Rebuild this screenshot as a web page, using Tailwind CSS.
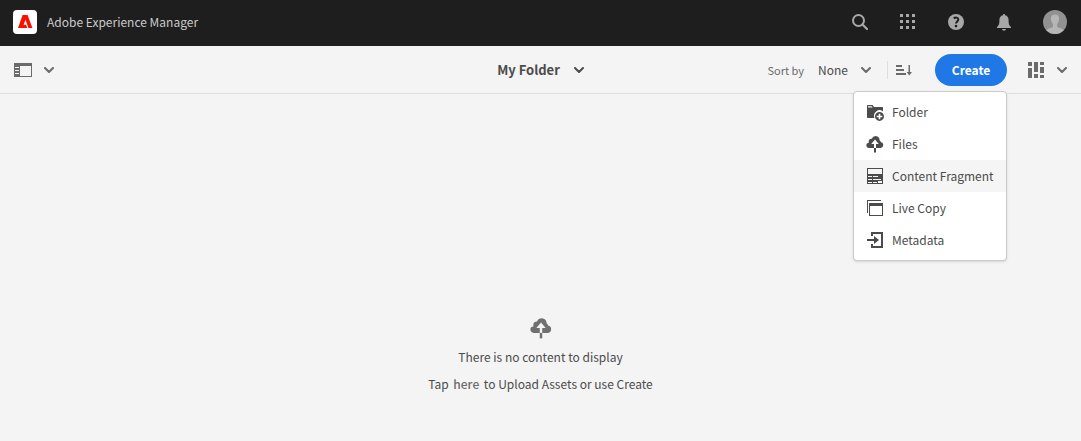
<!DOCTYPE html>
<html lang="en">
<head>
<meta charset="utf-8">
<meta name="viewport" content="width=device-width, initial-scale=1">
<title>Adobe Experience Manager</title>
<script src="https://cdn.jsdelivr.net/npm/@tailwindcss/browser@4"></script>
</head>
<body class="flex min-h-screen flex-col bg-[#f4f4f4] font-['Noto_Sans_CJK_SC','Noto_Sans',sans-serif] text-xs leading-5 text-[#4b4b4b]">

<svg class="hidden" aria-hidden="true">
  <symbol id="chevron" viewBox="0 0 10 6"><path d="M1 1l4 4 4-4" fill="none" stroke="currentColor" stroke-width="2" stroke-linecap="round" stroke-linejoin="round"/></symbol>
  <symbol id="upload" viewBox="0 0 18 18"><path fill="currentColor" d="M14.800 6.900A3 3 0 0 0 13.600 5.200 4.400 4.400 0 0 0 9.700 1 4.100 4.100 0 0 0 5.800 3.700 2.700 2.700 0 0 0 2.700 6.500c0 .5.100.9.200 1.300A2.500 2.500 0 0 0 .3 10.300C.3 11.700 1.400 13 3 13H8V9H5.200L9 4.600 12.800 9H10v4h4.700a3.100 3.100 0 0 0 .1-6.100z"/><path fill="currentColor" d="M8 13h2v4.500H8z"/></symbol>
</svg>

<header class="flex h-[46px] items-center bg-[#1e1e1e] pr-[14px] pl-[13px] pb-[2px] text-[#cacaca]">
  <a href="#" class="flex items-center gap-[10px]">
    <svg class="size-6" viewBox="0 0 24 24" aria-hidden="true"><rect width="24" height="24" rx="4" fill="#fff"/><path fill="#fa0f00" d="M9.600 5h5l4.800 13h-4L12.500 9.700l-1.900 5h2.500l1.200 3.300H5z"/></svg>
    <span>Adobe Experience Manager</span>
  </a>
  <nav class="ml-auto flex items-center text-[#a8a8a8]" aria-label="Global">
    <button class="flex h-10 w-12 items-center justify-center" aria-label="Search"><svg class="size-4" viewBox="0 0 16 16" fill="none" stroke="currentColor"><circle cx="6.500" cy="6.500" r="5.500" stroke-width="2"/><path d="M10.500 10.500l4.500 4.500" stroke-width="2.200" stroke-linecap="round"/></svg></button>
    <button class="flex h-10 w-12 items-center justify-center" aria-label="Solutions"><svg class="size-4" viewBox="0 0 16 16" fill="currentColor"><path d="M0 0h3v3H0zM6 0h3v3H6zM12 0h3v3h-3zM0 6h3v3H0zM6 6h3v3H6zM12 6h3v3h-3zM0 12h3v3H0zM6 12h3v3H6zM12 12h3v3h-3z"/></svg></button>
    <button class="flex h-10 w-12 items-center justify-center" aria-label="Help"><svg class="size-4" viewBox="0 0 16 16"><circle cx="8" cy="8" r="8" fill="currentColor"/><path d="M5.700 4.400C7.500 3 10.300 3.400 10.300 5.500c0 1.900-2.300 2-2.300 4.100" fill="none" stroke="#1e1e1e" stroke-width="2"/><circle cx="8" cy="12.100" r="1.300" fill="#1e1e1e"/></svg></button>
    <button class="flex h-10 w-12 items-center justify-center" aria-label="Notifications"><svg class="h-[18px] w-4" viewBox="0 0 16 18" fill="currentColor"><path d="M8 1c.8 0 1 .4 1 1.300 2.500.5 3.600 2.300 3.600 4.700 0 4.200.6 5.400 2.400 7v1H1v-1c1.800-1.600 2.400-2.800 2.400-7C3.400 4.600 4.500 2.800 7 2.300 7 1.400 7.200 1 8 1zM6 16h4c-.2 1.100-1 1.700-2 1.700S6.200 17.100 6 16z"/></svg></button>
    <button class="ml-[15px] size-6 overflow-hidden rounded-full" aria-label="User profile"><svg class="size-6" viewBox="0 0 24 24"><path fill="#919191" d="M0 0h24v24H0z"/><path fill="#b6b6b6" d="M12 4.500c2.700 0 4.300 1.900 4.100 4.600-.2 2.400-1 3.900-2 5v2.100c0 2 6 1.800 7 4.800v3H3v-3c1-3 7-2.800 7-4.800v-2.100c-1-1.100-1.900-2.600-2.100-5C7.700 6.400 9.300 4.500 12 4.500z"/></svg></button>
  </nav>
</header>

<div class="flex h-12 items-center border-b border-[#dedede] px-[14px] text-[#6b6b6b]">
  <div class="flex flex-1">
    <button class="flex items-center gap-3" aria-label="Toggle rail">
      <svg class="h-[14px] w-[18px]" viewBox="0 0 18 14" fill="currentColor"><path fill-rule="evenodd" d="M0 0h18v14H0zM6 3v10h11V3zM1 4v1h4V4zM1 7v1h4V7zM1 10v1h4v-1z"/></svg>
      <svg class="h-[6px] w-[10px]"><use href="#chevron"/></svg>
    </button>
  </div>
  <button class="flex items-center gap-[14px] text-[13px] font-bold text-[#4b4b4b]">My Folder
    <svg class="h-[6px] w-[10px]"><use href="#chevron"/></svg>
  </button>
  <div class="flex flex-1 items-center justify-end">
    <label for="sort" class="text-[11px]">Sort by</label>
    <div class="relative ml-[14px] text-[#4b4b4b]">
      <select id="sort" class="w-[53px] appearance-none bg-transparent"><option>None</option><option>Name</option></select>
      <svg class="pointer-events-none absolute inset-y-0 right-0 my-auto h-[6px] w-[10px] text-[#6b6b6b]"><use href="#chevron"/></svg>
    </div>
    <span class="mr-2 ml-4 h-[18px] w-px bg-[#dedede]"></span>
    <button aria-label="Sort direction"><svg class="h-3 w-4" viewBox="0 0 16 12" fill="currentColor"><path d="M0 1h6v2H0zM0 5h8v2H0zM0 9h10v2H0zM12.500 1h1.500v7h2l-2.700 3.500L10.600 8h1.900z"/></svg></button>
    <div class="relative ml-[23px]">
      <button class="h-8 w-[72px] rounded-full bg-[#1f78e6] font-bold text-white" aria-haspopup="menu" aria-expanded="true">Create</button>
      <ul role="menu" class="absolute top-full right-0 z-10 mt-[5px] w-[154px] rounded border border-[#cacaca] bg-white py-1 text-[#4b4b4b] shadow-sm">
        <li><button role="menuitem" class="flex h-8 w-full items-center gap-2 pl-3"><svg class="size-[18px]" viewBox="0 0 18 18" fill="currentColor"><path d="M1 3c0-.6.400-1 1-1h4.500l1.500 2h8c.6 0 1 .4 1 1v3.500A5.500 5.500 0 0 0 8.500 15H2c-.6 0-1-.4-1-1zM2 3.200v1.300h4.600l-.9-1.300z" fill-rule="evenodd"/><path fill-rule="evenodd" d="M13.500 8.900a4.500 4.500 0 1 1 0 9 4.500 4.500 0 0 1 0-9zm-.8 1.800v2h-2v1.600h2v2h1.600v-2h2v-1.600h-2v-2z"/></svg>Folder</button></li>
        <li><button role="menuitem" class="flex h-8 w-full items-center gap-2 pl-3"><svg class="size-[18px]"><use href="#upload"/></svg>Files</button></li>
        <li><button role="menuitem" class="flex h-8 w-full items-center gap-2 bg-[#f5f5f5] pl-3"><svg class="size-[18px]" viewBox="0 0 18 18" fill="currentColor"><path fill-rule="evenodd" d="M1 1h16v16H1zM2 2v5h14V2zM2 9v1h4V9zM7 9v1h5V9zM2 12v1h4v-1zM7 12v1h8v-1zM2 15v1h4v-1zM7 15v1h4v-1zM12 14v2h4v-2z"/></svg>Content Fragment</button></li>
        <li><button role="menuitem" class="flex h-8 w-full items-center gap-2 pl-3"><svg class="size-[18px]" viewBox="0 0 18 18" fill="currentColor"><path d="M1 1h14v1H2v12H1z"/><path fill-rule="evenodd" d="M3 4h14v13H3zM4 7v9h12V7z"/></svg>Live Copy</button></li>
        <li><button role="menuitem" class="flex h-8 w-full items-center gap-2 pl-3"><svg class="size-[18px]" viewBox="0 0 18 18" fill="currentColor"><path d="M5 1h12v16H5v-4h2v2h8V3H7v2H5z"/><path d="M1 8h7V5l5 4-5 4v-3H1z"/></svg>Metadata</button></li>
      </ul>
    </div>
    <button class="ml-[21px] flex items-center gap-[13px]" aria-label="View">
      <svg class="size-4" viewBox="0 0 16 16" fill="currentColor"><path d="M0 0h4v4H0zM0 6h4v10H0zM6 0h4v10H6zM6 12h4v4H6zM12 0h4v3h-4zM12 5h4v6h-4zM12 13h4v3h-4z"/></svg>
      <svg class="h-[6px] w-[10px]"><use href="#chevron"/></svg>
    </button>
  </div>
</div>

<main class="flex flex-1 flex-col items-center pt-[223px]">
  <svg class="size-[22px] text-[#707070]" aria-hidden="true"><use href="#upload"/></svg>
  <p class="mt-2">There is no content to display</p>
  <p class="mt-[7px]">Tap <a href="#" class="mx-[2px] font-medium text-[#6b6b6b]">here</a> to Upload Assets or use Create</p>
</main>
</body>
</html>
